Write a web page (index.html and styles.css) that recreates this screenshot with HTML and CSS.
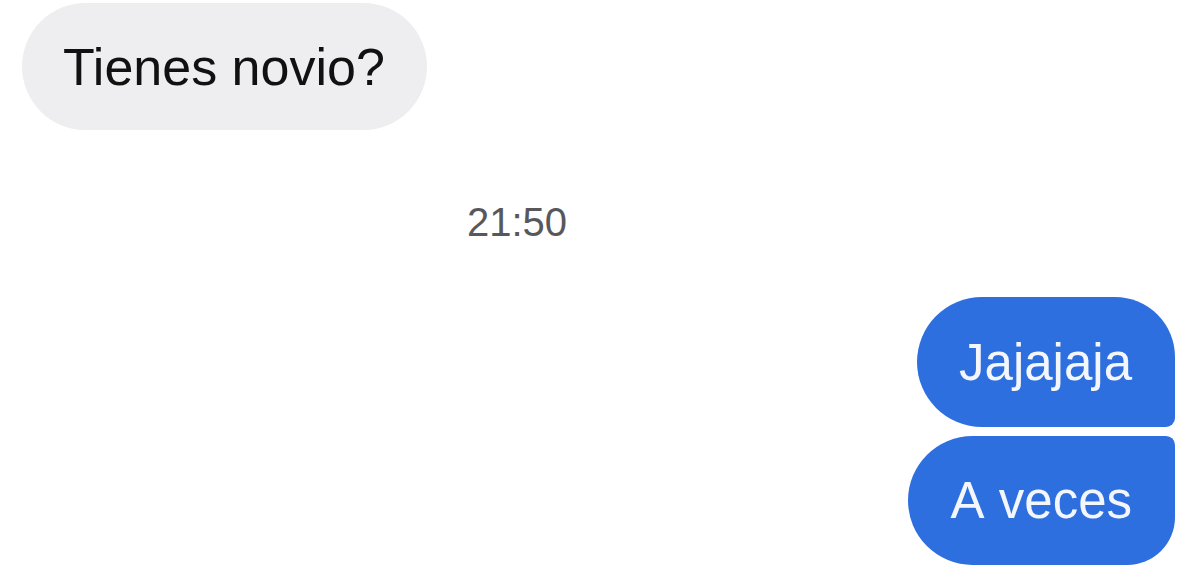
FILE: index.html
```html
<!DOCTYPE html>
<html lang="es">
<head>
<meta charset="utf-8">
<title>Chat</title>
<link rel="stylesheet" href="styles.css">
</head>
<body>
<div class="chat">
  <div class="row row-in">
    <div class="bubble bubble-in">Tienes novio?</div>
  </div>
  <div class="time">21:50</div>
  <div class="row row-out">
    <div class="bubble bubble-out first">Jajajaja</div>
    <div class="bubble bubble-out last">A veces</div>
  </div>
</div>
</body>
</html>
```
FILE: styles.css
```css
html, body {
  margin: 0;
  padding: 0;
  background: #ffffff;
}
body {
  font-family: "Liberation Sans", Arial, sans-serif;
  width: 1200px;
  height: 584px;
  overflow: hidden;
}
.chat {
  display: flex;
  flex-direction: column;
  padding: 3px 25px 0 22px;
}
.row {
  display: flex;
  flex-direction: column;
}
.row-in {
  align-items: flex-start;
}
.row-out {
  align-items: flex-end;
  gap: 9px;
  margin-top: 55px;
}
.bubble {
  display: flex;
  align-items: center;
  font-size: 51px;
  line-height: 1;
  white-space: nowrap;
}
.bubble-in {
  height: 127px;
  padding: 0 42px 0 41px;
  border-radius: 64px;
  background: #eeeef0;
  color: #111111;
  font-size: 52px;
}
.time {
  margin: 72px 0 0 445px;
  font-size: 40px;
  line-height: 40px;
  color: #58585c;
}
.bubble-out {
  background: #2e6fe0;
  color: #f3f6fb;
  padding: 0 43px 0 42px;
}
.first {
  height: 130px;
  border-radius: 65px 60px 9px 65px;
}
.last {
  height: 129px;
  border-radius: 65px 9px 48px 65px;
  word-spacing: 3px;
}
```
